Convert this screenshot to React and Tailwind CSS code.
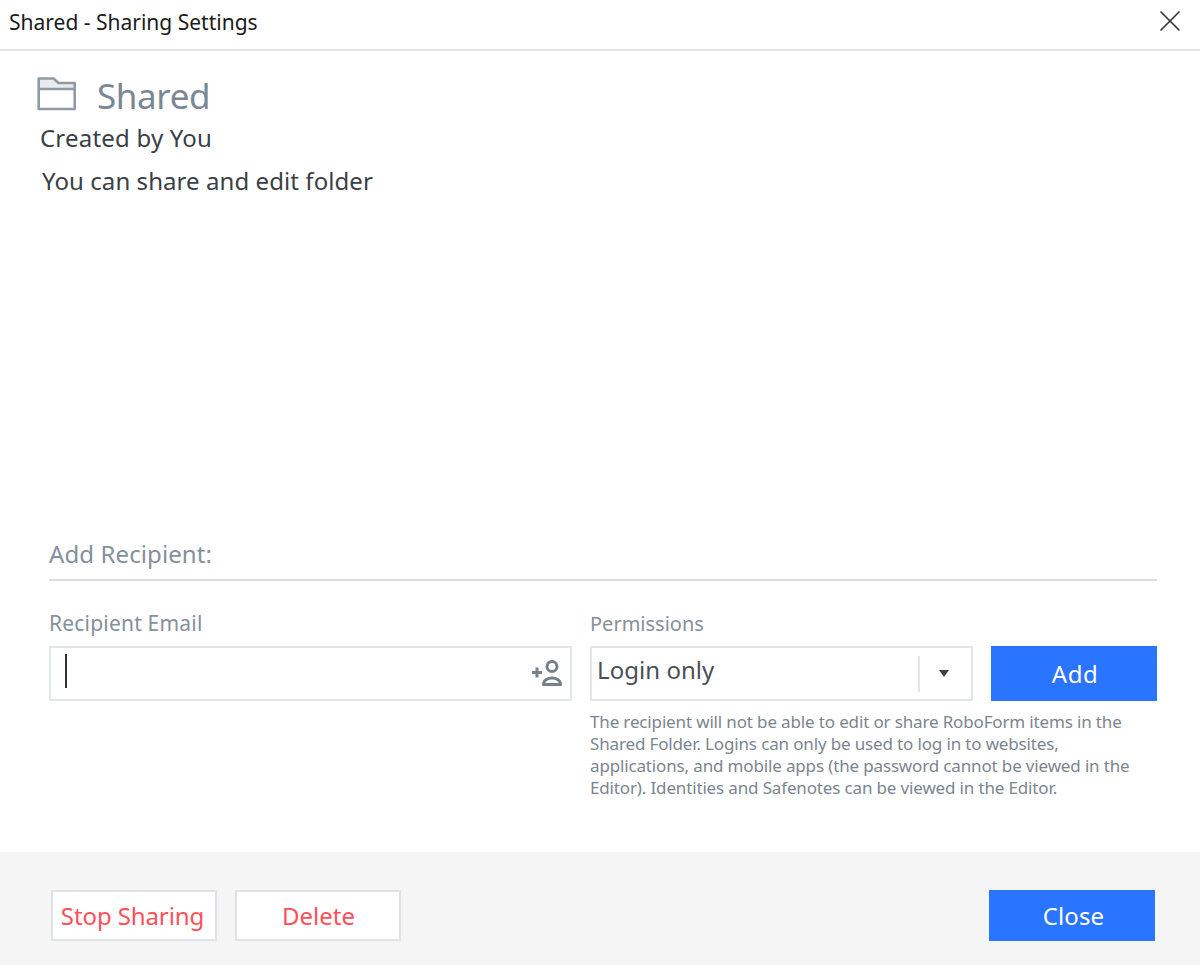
import React from 'react';
import { X } from 'lucide-react';

const FolderIcon = () => (
  <svg width="40" height="36" viewBox="0 0 40 36" fill="none" className="mt-[2px]">
    <path d="M2.700 3.500H17.500L22.500 8H38.700V34H2.700z" fill="#ffffff" />
    <path d="M2.700 3.500H17.500L22.500 8H38.700V14H2.700z" fill="#e9ebed" />
    <path d="M2.700 3.500H17.500L22.500 8H38.700V34H2.700zM2.700 14H38.700" stroke="#909aa4" strokeWidth="2.600" strokeLinejoin="round" />
  </svg>
);

const AddUserIcon = () => (
  <svg width="32" height="28" viewBox="0 0 32 28" fill="none" stroke="#76818b" strokeWidth="3">
    <circle cx="21" cy="6.500" r="5" />
    <path d="M12.500 24.500c0-4 4-6.500 8.500-6.500s8.500 2.500 8.500 6.500z" strokeLinejoin="round" />
    <path d="M1 12.500h10M6 7.500v10" />
  </svg>
);

const App = () => {
  return (
    <div className="flex h-[965px] w-[1200px] flex-col overflow-hidden bg-white font-['Noto_Sans',sans-serif]">
      {/* Title bar */}
      <div className="flex h-[51px] shrink-0 items-center justify-between border-b-2 border-[#e3e5e8] pl-[9px] pr-[12px] pb-[3px]">
        <span className="text-[21px] text-[#1a1a1a]">Shared - Sharing Settings</span>
        <X className="mb-[4px] h-[36px] w-[36px] text-[#333]" strokeWidth={1.1} />
      </div>

      {/* Folder info */}
      <div className="flex-1 pl-[36px] pt-[22px]">
        <div className="flex items-start gap-[21px]">
          <FolderIcon />
          <span className="text-[35px] leading-[46px] tracking-[-0.4px] text-[#7a8794]">Shared</span>
        </div>
        <p className="ml-[4px] mt-[2px] text-[24px] leading-[33px] tracking-[0.2px] text-[#3a3f45]">Created by You</p>
        <p className="ml-[6px] mt-[10px] text-[24px] leading-[33px] tracking-[0.07px] text-[#3a3f45]">You can share and edit folder</p>
      </div>

      {/* Add recipient */}
      <div className="h-[313px] shrink-0 pl-[49px] pr-[43px]">
        <div className="border-b-2 border-[#d9dde1] pb-[10px] text-[24px] leading-[30px] tracking-[0.1px] text-[#84909b]">Add Recipient:</div>
        <div className="mt-[28px] flex">
          <div className="w-[523px]">
            <div className="text-[21px] leading-[28px] tracking-[0.2px] text-[#84909b]">Recipient Email</div>
            <div className="mt-[9px] flex h-[55px] items-center justify-between border-2 border-[#e3e6e9] pl-[14px] pr-[7px]">
              <div className="mb-[6px] h-[34px] w-[2px] bg-[#333]" />
              <AddUserIcon />
            </div>
          </div>
          <div className="ml-[18px] w-[383px]">
            <div className="text-[20px] leading-[30px] text-[#84909b]">Permissions</div>
            <div className="mt-[7px] flex h-[55px] items-center border-2 border-[#e3e6e9] pl-[5px]">
              <span className="mb-[7px] flex-1 text-[24px] tracking-[0.05px] text-[#4a4f55]">Login only</span>
              <div className="flex h-[36px] w-[53px] items-center justify-center border-l-2 border-[#e3e6e9] pr-[3px]">
                <div className="h-0 w-0 border-x-[5.500px] border-t-[7px] border-x-transparent border-t-[#3d4248]" />
              </div>
            </div>
          </div>
          <button className="ml-[18px] mt-[37px] h-[55px] w-[166px] bg-[#2a75ff] pl-[2px] text-[24px] tracking-[0.5px] text-white">Add</button>
        </div>
        <p className="ml-[541px] mt-[10px] w-[550px] text-[17px] leading-[22px] tracking-[-0.15px] text-[#7b8590]">
          The recipient will not be able to edit or share RoboForm items in the Shared Folder. Logins can only be used to log in to websites, applications, and mobile apps (the password cannot be viewed in the Editor). Identities and Safenotes can be viewed in the Editor.
        </p>
      </div>

      {/* Footer */}
      <div className="flex h-[113px] shrink-0 items-start bg-[#f5f5f5] pl-[51px] pr-[45px] pt-[38px]">
        <button className="h-[51px] w-[166px] border-2 border-[#dfe2e6] bg-white pr-[3px] text-[24px] tracking-[-0.1px] text-[#ff4f5a]">Stop Sharing</button>
        <button className="ml-[18px] h-[51px] w-[166px] border-2 border-[#dfe2e6] bg-white pl-[1px] text-[24px] text-[#ff4f5a]">Delete</button>
        <button className="ml-auto h-[51px] w-[166px] bg-[#2a75ff] pl-[3px] text-[24px] tracking-[0.1px] text-white">Close</button>
      </div>
    </div>
  );
};

export default App;
